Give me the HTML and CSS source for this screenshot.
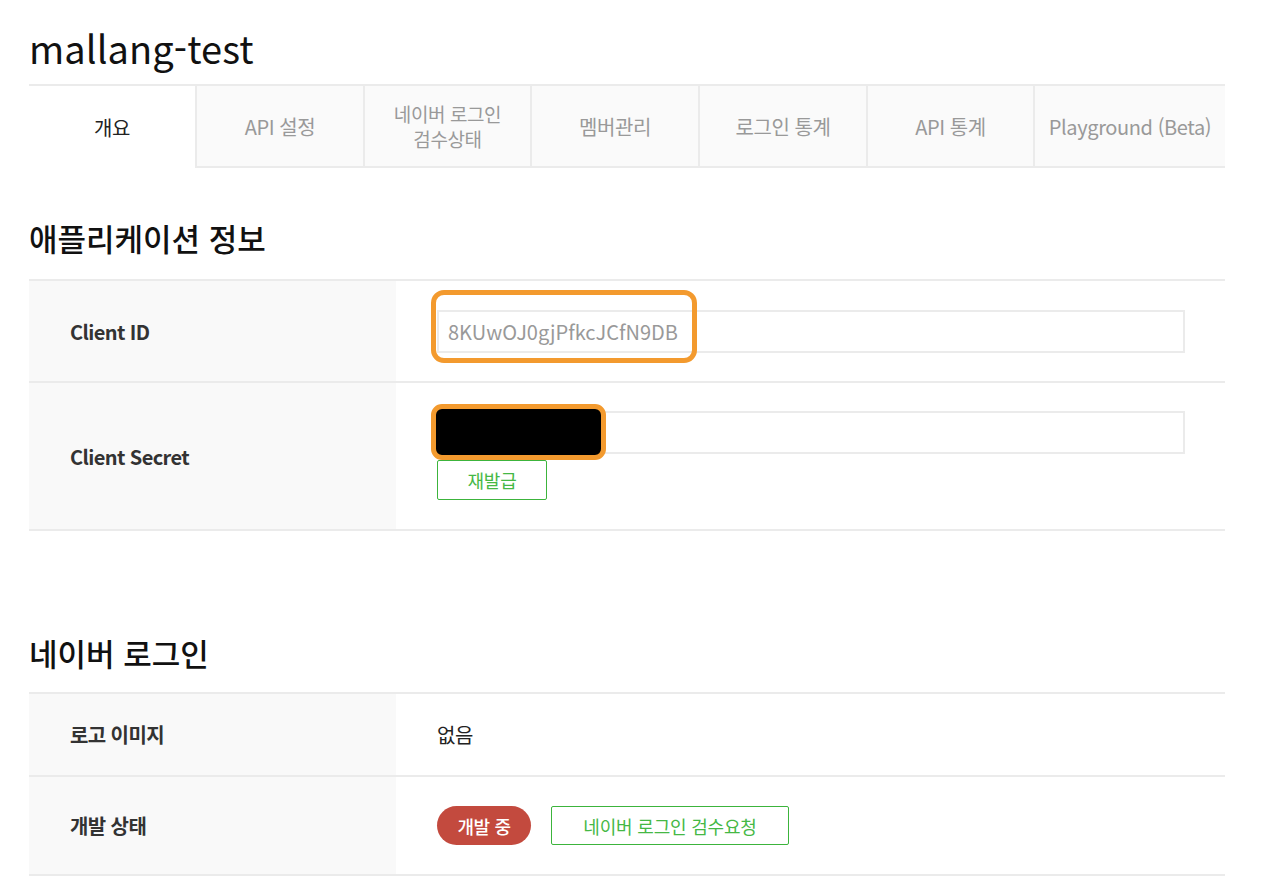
FILE: index.html
```html
<!DOCTYPE html>
<html lang="ko">
<head>
<meta charset="utf-8">
<title>mallang-test</title>
<link rel="stylesheet" href="styles.css">
</head>
<body>
<div class="page">
  <h1 class="app-title">mallang-test</h1>
  <nav class="tabs">
    <div class="tab tab-active">개요</div>
    <div class="tab">API 설정</div>
    <div class="tab tab-two"><span>네이버 로그인</span><span>검수상태</span></div>
    <div class="tab">멤버관리</div>
    <div class="tab">로그인 통계</div>
    <div class="tab">API 통계</div>
    <div class="tab tab-last">Playground (Beta)</div>
  </nav>

  <h2 class="section-title first">애플리케이션 정보</h2>
  <div class="table">
    <div class="row row-id">
      <div class="label">Client ID</div>
      <div class="value">
        <div class="field">
          <span class="field-text">8KUwOJ0gjPfkcJCfN9DB</span>
          <span class="mark mark-id"></span>
        </div>
      </div>
    </div>
    <div class="row row-secret">
      <div class="label">Client Secret</div>
      <div class="value">
        <div class="field">
          <span class="mark mark-secret"></span>
        </div>
        <button class="btn-line btn-reissue">재발급</button>
      </div>
    </div>
  </div>

  <h2 class="section-title second">네이버 로그인</h2>
  <div class="table">
    <div class="row row-logo">
      <div class="label">로고 이미지</div>
      <div class="value plain">없음</div>
    </div>
    <div class="row row-status">
      <div class="label">개발 상태</div>
      <div class="value status">
        <span class="badge">개발 중</span>
        <button class="btn-line btn-review">네이버 로그인 검수요청</button>
      </div>
    </div>
  </div>
</div>
</body>
</html>
```
FILE: styles.css
```css
* { box-sizing: border-box; }
html, body { margin: 0; padding: 0; background: #fff; }
body {
  font-family: "Noto Sans CJK KR", "Noto Sans", sans-serif;
  color: #222;
}
.page {
  width: 1196px;
  margin-left: 29px;
}
.app-title {
  margin: 0;
  height: 84px;
  padding-top: 22px;
  font-size: 38px;
  font-weight: 400;
  line-height: 52px;
  letter-spacing: 0.1px;
  color: #111;
}
.tabs {
  display: grid;
  grid-template-columns: 166px 168px 167px 168px 168px 167px 1fr;
  border-top: 2px solid #ebebeb;
  height: 84px;
}
.tab {
  display: flex;
  flex-direction: column;
  align-items: center;
  justify-content: center;
  text-align: center;
  background: #fafafa;
  border-left: 2px solid #ebebeb;
  border-bottom: 2px solid #ebebeb;
  font-size: 20px;
  line-height: 25px;
  color: #999;
  letter-spacing: -0.4px;
}
.tab-two { font-size: 19px; line-height: 25px; }
.tab-active {
  background: #fff;
  border-left: none;
  border-bottom: none;
  color: #222;
}
.section-title {
  margin: 0;
  font-size: 31px;
  font-weight: 500;
  letter-spacing: 0;
  color: #111;
  line-height: 40px;
}
.section-title.first { padding-top: 50px; padding-bottom: 21px; }
.section-title.second { padding-top: 102px; padding-bottom: 19px; }
.table { border-top: 2px solid #ebebeb; }
.row {
  display: grid;
  grid-template-columns: 367px 1fr;
  border-bottom: 2px solid #ebebeb;
}
.label {
  background: #f9f9f9;
  display: flex;
  align-items: center;
  padding-left: 41px;
  font-size: 20px;
  font-weight: 700;
  letter-spacing: -0.6px;
  color: #333;
}
.value {
  padding-left: 41px;
  padding-right: 40px;
}
.row-id { height: 102px; }
.row-id .value { padding-top: 29px; }
.row-secret { height: 148px; }
.row-secret .value { padding-top: 28px; }
.field {
  position: relative;
  height: 43px;
  border: 2px solid #ebebeb;
  display: flex;
  align-items: center;
  padding-left: 9px;
}
.field-text {
  font-size: 20px;
  color: #999;
  letter-spacing: 0;
}
.mark {
  position: absolute;
  border: 5px solid #f39a2e;
}
.mark-id {
  left: -8px;
  top: -22px;
  width: 266px;
  height: 73px;
  border-radius: 13px;
}
.mark-secret {
  left: -8px;
  top: -9px;
  width: 175px;
  height: 56px;
  border-radius: 11px;
  background: #000;
}
.btn-line {
  font-family: inherit;
  background: #fff;
  border: 1px solid #3cb43c;
  border-radius: 2px;
  color: #45b845;
  font-size: 18px;
  letter-spacing: -0.2px;
  padding: 0;
  cursor: pointer;
  display: flex;
  align-items: center;
  justify-content: center;
}
.btn-reissue {
  margin-top: 6px;
  width: 110px;
  height: 40px;
}
.row-logo { height: 83px; }
.row-status { height: 99px; }
.value.plain {
  display: flex;
  align-items: center;
  font-size: 20px;
  color: #222;
  letter-spacing: -0.4px;
}
.value.status {
  display: flex;
  align-items: center;
  gap: 20px;
}
.badge {
  width: 94px;
  height: 39px;
  border-radius: 20px;
  background: #c34a3e;
  color: #fff;
  font-size: 18px;
  font-weight: 500;
  letter-spacing: -0.4px;
  display: flex;
  align-items: center;
  justify-content: center;
}
.btn-review {
  width: 238px;
  height: 39px;
}
```
